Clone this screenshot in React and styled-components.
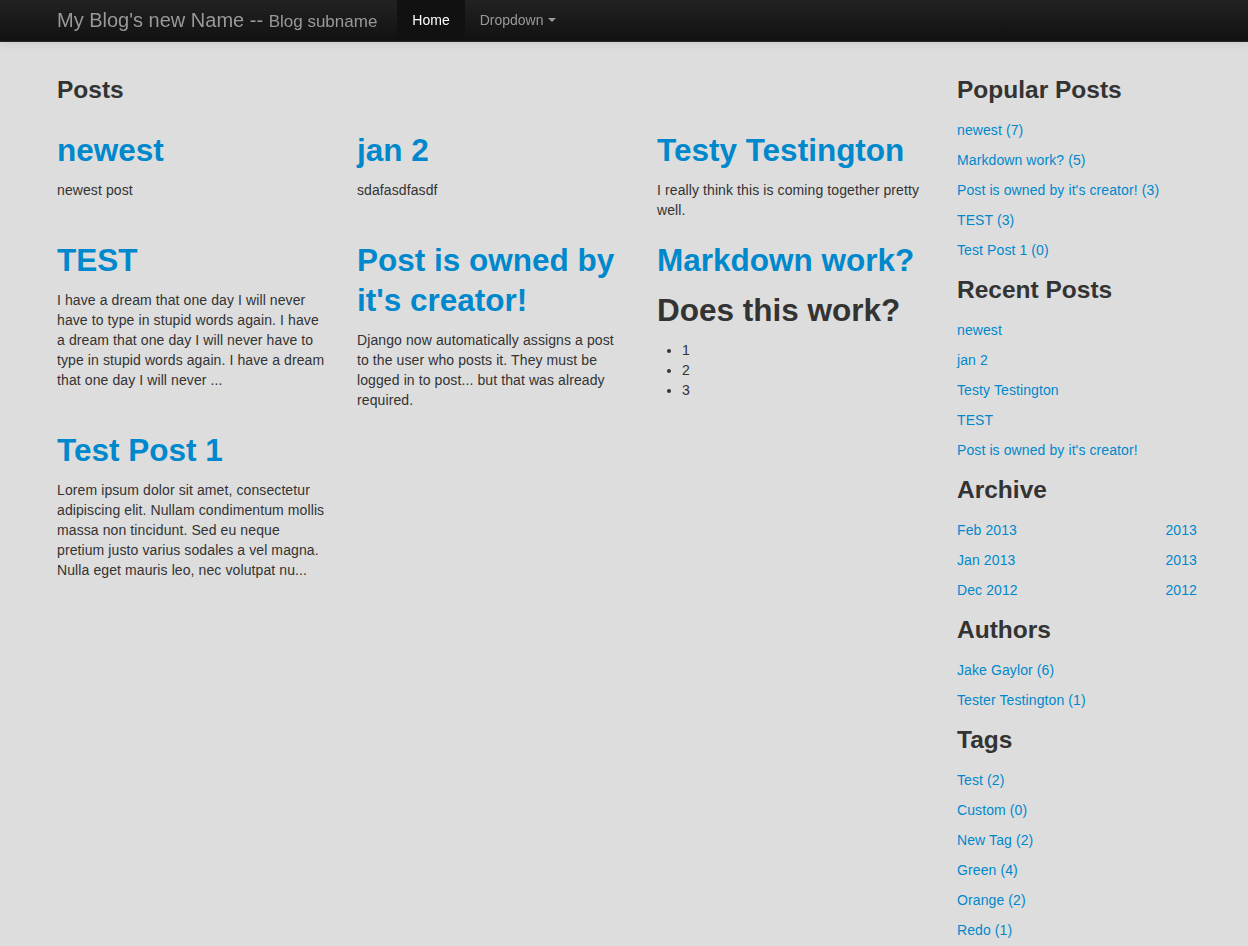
import React from "react";
import styled, { createGlobalStyle } from "styled-components";

const Global = createGlobalStyle`
  html { background: #dddddd; }
  body {
    margin: 0;
    padding-top: 60px;
    background: #dddddd;
    font-family: "Liberation Sans", Arial, Helvetica, sans-serif;
    font-size: 14px;
    line-height: 20px;
    color: #333333;
  }
  * { box-sizing: content-box; }
  a { color: #0088cc; text-decoration: none; }
`;

const NavBar = styled.div`
  position: fixed;
  top: 0;
  left: 0;
  right: 0;
  z-index: 10;
  background-color: #1b1b1b;
  background-image: linear-gradient(to bottom, #222222, #111111);
  border-bottom: 1px solid #252525;
  box-shadow: 0 1px 10px rgba(0, 0, 0, 0.1);
`;

const Container = styled.div`
  width: 1170px;
  margin-left: 57px;
`;

const NavInner = styled(Container)`
  display: flex;
  align-items: stretch;
  height: 41px;
`;

const Brand = styled.a`
  display: block;
  padding: 10px 20px 10px 0;
  font-size: 20px;
  line-height: 20px;
  font-weight: 200;
  color: #999999;
  white-space: nowrap;
`;

const Small = styled.small`
  font-size: 17px;
`;

const NavList = styled.ul`
  display: flex;
  list-style: none;
  margin: 0;
  padding: 0;
`;

const NavLink = styled.a`
  display: block;
  height: 21px;
  padding: 10px 15px 10px;
  line-height: 20px;
  color: ${(p) => (p.$active ? "#ffffff" : "#999999")};
  background-color: ${(p) => (p.$active ? "#111111" : "transparent")};
`;

const Caret = styled.b`
  display: inline-block;
  width: 0;
  height: 0;
  vertical-align: top;
  margin-top: 8px;
  margin-left: 4px;
  border-top: 4px solid #999999;
  border-left: 4px solid transparent;
  border-right: 4px solid transparent;
`;

const Layout = styled(Container)`
  display: flex;
  gap: 30px;
`;

const Main = styled.div`
  width: 870px;
`;

const Side = styled.div`
  width: 240px;
`;

const H3 = styled.h3`
  margin: 10px 0;
  font-size: 24.5px;
  line-height: 40px;
  font-weight: bold;
  color: #333333;
`;

const PostRow = styled.div`
  display: flex;
  gap: 30px;
  align-items: flex-start;
`;

const Post = styled.div`
  width: 270px;
`;

const Title = styled.h2`
  margin: 10px 0;
  font-size: 31.5px;
  line-height: 40px;
  font-weight: bold;
  color: ${(p) => (p.$plain ? "#333333" : "#0088cc")};
`;

const P = styled.p`
  margin: 0 0 10px;
  letter-spacing: 0.1px;
`;

const Ul = styled.ul`
  margin: 0 0 10px 25px;
  padding: 0;
`;

const SideItem = styled.p`
  margin: 0 0 10px;
  display: flex;
  justify-content: space-between;
  letter-spacing: 0.1px;
`;

const posts = [
  [
    { title: "newest", body: <P>newest post</P> },
    { title: "jan 2", body: <P>sdafasdfasdf</P> },
    {
      title: "Testy Testington",
      body: <P>I really think this is coming together pretty well.</P>,
    },
  ],
  [
    {
      title: "TEST",
      body: (
        <P>
          I have a dream that one day I will never have to type in stupid words
          again. I have a dream that one day I will never have to type in stupid
          words again. I have a dream that one day I will never ...
        </P>
      ),
    },
    {
      title: "Post is owned by it's creator!",
      body: (
        <P>
          Django now automatically assigns a post to the user who posts it. They
          must be logged in to post... but that was already required.
        </P>
      ),
    },
    {
      title: "Markdown work?",
      body: (
        <>
          <Title $plain>Does this work?</Title>
          <Ul>
            <li>1</li>
            <li>2</li>
            <li>3</li>
          </Ul>
        </>
      ),
    },
  ],
  [
    {
      title: "Test Post 1",
      body: (
        <P>
          Lorem ipsum dolor sit amet, consectetur adipiscing elit. Nullam
          condimentum mollis massa non tincidunt. Sed eu neque pretium justo
          varius sodales a vel magna. Nulla eget mauris leo, nec volutpat nu...
        </P>
      ),
    },
  ],
];

const sidebar = [
  {
    title: "Popular Posts",
    items: [
      "newest (7)",
      "Markdown work? (5)",
      "Post is owned by it's creator! (3)",
      "TEST (3)",
      "Test Post 1 (0)",
    ],
  },
  {
    title: "Recent Posts",
    items: [
      "newest",
      "jan 2",
      "Testy Testington",
      "TEST",
      "Post is owned by it's creator!",
    ],
  },
  {
    title: "Archive",
    items: [
      ["Feb 2013", "2013"],
      ["Jan 2013", "2013"],
      ["Dec 2012", "2012"],
    ],
  },
  {
    title: "Authors",
    items: ["Jake Gaylor (6)", "Tester Testington (1)"],
  },
  {
    title: "Tags",
    items: [
      "Test (2)",
      "Custom (0)",
      "New Tag (2)",
      "Green (4)",
      "Orange (2)",
      "Redo (1)",
    ],
  },
];

export default function App() {
  return (
    <>
      <Global />
      <NavBar>
        <NavInner>
          <Brand href="#">
            My Blog's new Name -- <Small>Blog subname</Small>
          </Brand>
          <NavList>
            <li>
              <NavLink href="#" $active>
                Home
              </NavLink>
            </li>
            <li>
              <NavLink href="#">
                Dropdown
                <Caret />
              </NavLink>
            </li>
          </NavList>
        </NavInner>
      </NavBar>
      <Layout>
        <Main>
          <H3>Posts</H3>
          {posts.map((row, i) => (
            <PostRow key={i}>
              {row.map((post) => (
                <Post key={post.title}>
                  <Title>
                    <a href="#">{post.title}</a>
                  </Title>
                  {post.body}
                </Post>
              ))}
            </PostRow>
          ))}
        </Main>
        <Side>
          {sidebar.map((sec) => (
            <div key={sec.title}>
              <H3>{sec.title}</H3>
              {sec.items.map((it, j) =>
                Array.isArray(it) ? (
                  <SideItem key={j}>
                    <a href="#">{it[0]}</a>
                    <a href="#">{it[1]}</a>
                  </SideItem>
                ) : (
                  <SideItem key={j}>
                    <a href="#">{it}</a>
                  </SideItem>
                )
              )}
            </div>
          ))}
        </Side>
      </Layout>
    </>
  );
}
